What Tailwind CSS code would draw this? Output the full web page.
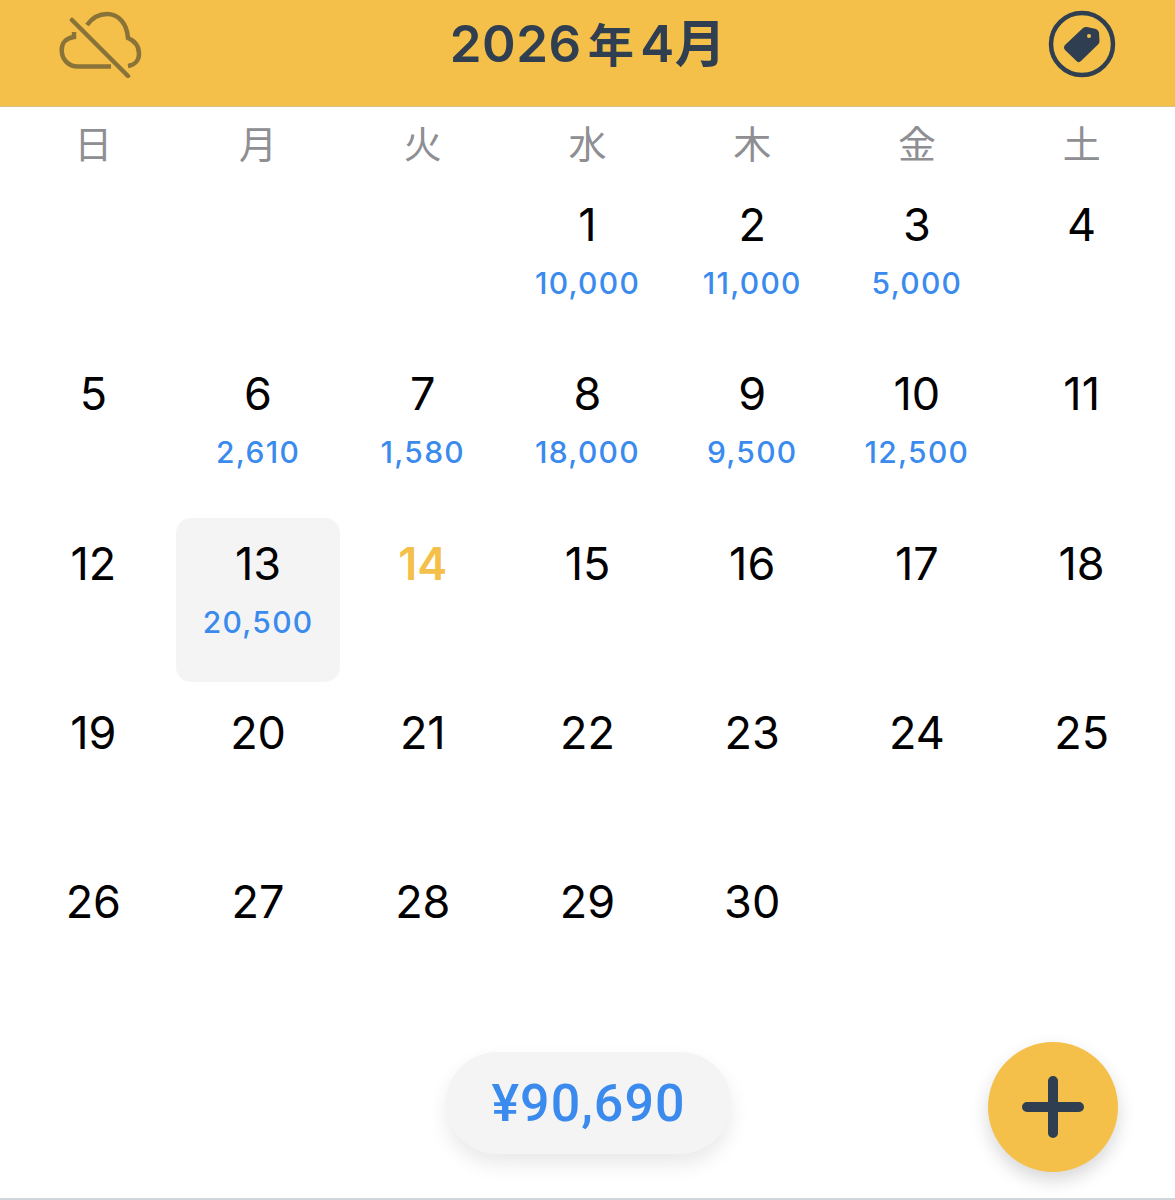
<!DOCTYPE html>
<html lang="ja">
 <head>
  <meta charset="utf-8"/>
  <title>カレンダー</title>
  <script src="https://cdn.jsdelivr.net/npm/@tailwindcss/browser@4"></script>
 </head>
 <body class="bg-white font-['Inter','Noto_Sans_CJK_JP',sans-serif]">
  <div class="relative h-[1200px] w-[1175px] overflow-hidden border-b-2 border-gray-300">
   <!-- header -->
   <header class="grid h-[107px] grid-cols-[1fr_auto_1fr] items-center border-b border-[#d9c28a] bg-[#f4c04a] pb-[18px] pl-[58px] pr-[59px]">
    <svg class="h-[68px] w-[86px]" viewBox="0 0 86 68" fill="none" stroke="#8a7338" stroke-width="4.500">
     <path d="M16 22V27C8 28 3.700 33 3.700 40C3.700 49 10 56.500 20 56.500H53"/>
     <path d="M29 15C34 8 41 4 49 4C61 4 69 14 70 28C77 31 81 37 81 44C81 50 77 55 70 56"/>
     <path d="M14 10L70 66" stroke-linecap="round"/>
    </svg>
    <h1 class="ml-[2px] text-[51px] font-semibold tracking-[0.500px] text-[#2f3e50]">2026<span class="mx-[6px] text-[46px]">年</span>4月</h1>
    <svg class="h-[68px] w-[68px] justify-self-end" viewBox="0 0 68 68" fill="none">
     <circle cx="34" cy="34" r="31" stroke="#2f3e50" stroke-width="4.500"/>
     <path d="M17 35L35 18Q37 16.500 39 17L48 19Q50.500 20 51 22.500L51.500 31Q51.500 33 50 34.500L33 51Q31 53 29 51.500L17 40Q15 37.500 17 35Z" fill="#2f3e50"/>
     <circle cx="41" cy="26" r="2" fill="#f4c04a"/>
    </svg>
   </header>
   <main class="px-[11px]">
    <!-- weekdays -->
    <div class="grid h-[76px] grid-cols-7 items-center pb-[1px] text-center text-[38px] text-[#8e8e93]">
     <div>日</div><div>月</div><div>火</div><div>水</div><div>木</div><div>金</div><div>土</div>
    </div>
    <!-- days -->
    <div class="grid grid-cols-7 auto-rows-[169.300px] text-center text-[45px] leading-[56px] text-black">
     <div></div><div></div><div></div>
     <div class="pt-[14px]">1<p class="mt-[12px] text-[30px] font-medium leading-[36px] tracking-[1.300px] text-[#3b8bee]">10,000</p></div>
     <div class="pt-[14px]">2<p class="mt-[12px] text-[30px] font-medium leading-[36px] tracking-[1.300px] text-[#3b8bee]">11,000</p></div>
     <div class="pt-[14px]">3<p class="mt-[12px] text-[30px] font-medium leading-[36px] tracking-[1.300px] text-[#3b8bee]">5,000</p></div>
     <div class="pt-[14px]">4</div>
     <div class="pt-[14px]">5</div>
     <div class="pt-[14px]">6<p class="mt-[12px] text-[30px] font-medium leading-[36px] tracking-[1.300px] text-[#3b8bee]">2,610</p></div>
     <div class="pt-[14px]">7<p class="mt-[12px] text-[30px] font-medium leading-[36px] tracking-[1.300px] text-[#3b8bee]">1,580</p></div>
     <div class="pt-[14px]">8<p class="mt-[12px] text-[30px] font-medium leading-[36px] tracking-[1.300px] text-[#3b8bee]">18,000</p></div>
     <div class="pt-[14px]">9<p class="mt-[12px] text-[30px] font-medium leading-[36px] tracking-[1.300px] text-[#3b8bee]">9,500</p></div>
     <div class="pt-[14px]">10<p class="mt-[12px] text-[30px] font-medium leading-[36px] tracking-[1.300px] text-[#3b8bee]">12,500</p></div>
     <div class="pt-[14px]">11</div>
     <div class="pt-[14px]">12</div>
     <div class="-mt-[4px] h-[164px] rounded-[15px] bg-[#f4f4f5] pt-[18px]">13<p class="mt-[12px] text-[30px] font-medium leading-[36px] tracking-[1.300px] text-[#3b8bee]">20,500</p></div>
     <div class="pt-[14px] font-semibold text-[#f4c04a]">14</div>
     <div class="pt-[14px]">15</div>
     <div class="pt-[14px]">16</div>
     <div class="pt-[14px]">17</div>
     <div class="pt-[14px]">18</div>
     <div class="pt-[14px]">19</div>
     <div class="pt-[14px]">20</div>
     <div class="pt-[14px]">21</div>
     <div class="pt-[14px]">22</div>
     <div class="pt-[14px]">23</div>
     <div class="pt-[14px]">24</div>
     <div class="pt-[14px]">25</div>
     <div class="pt-[14px]">26</div>
     <div class="pt-[14px]">27</div>
     <div class="pt-[14px]">28</div>
     <div class="pt-[14px]">29</div>
     <div class="pt-[14px]">30</div>
    </div>
   </main>
   <!-- floating total -->
   <div class="absolute left-[446px] top-[1052px] flex h-[102px] w-[285px] items-center justify-center rounded-[51px] bg-[#f4f4f5] pt-[2px] font-['Roboto'] text-[52px] font-medium tracking-[1px] text-[#3b8bee] shadow-[0_10px_20px_rgba(0,0,0,0.09)]">¥90,690</div>
   <!-- add button -->
   <button class="absolute left-[988px] top-[1042px] flex h-[130px] w-[130px] items-center justify-center rounded-full bg-[#f4c04a] shadow-[0_8px_18px_rgba(0,0,0,0.16)]">
    <svg class="h-[62px] w-[62px]" viewBox="0 0 62 62" fill="none" stroke="#2f3e50" stroke-width="10" stroke-linecap="round">
     <path d="M31 5V57M5 31H57"/>
    </svg>
   </button>
  </div>
 </body>
</html>
